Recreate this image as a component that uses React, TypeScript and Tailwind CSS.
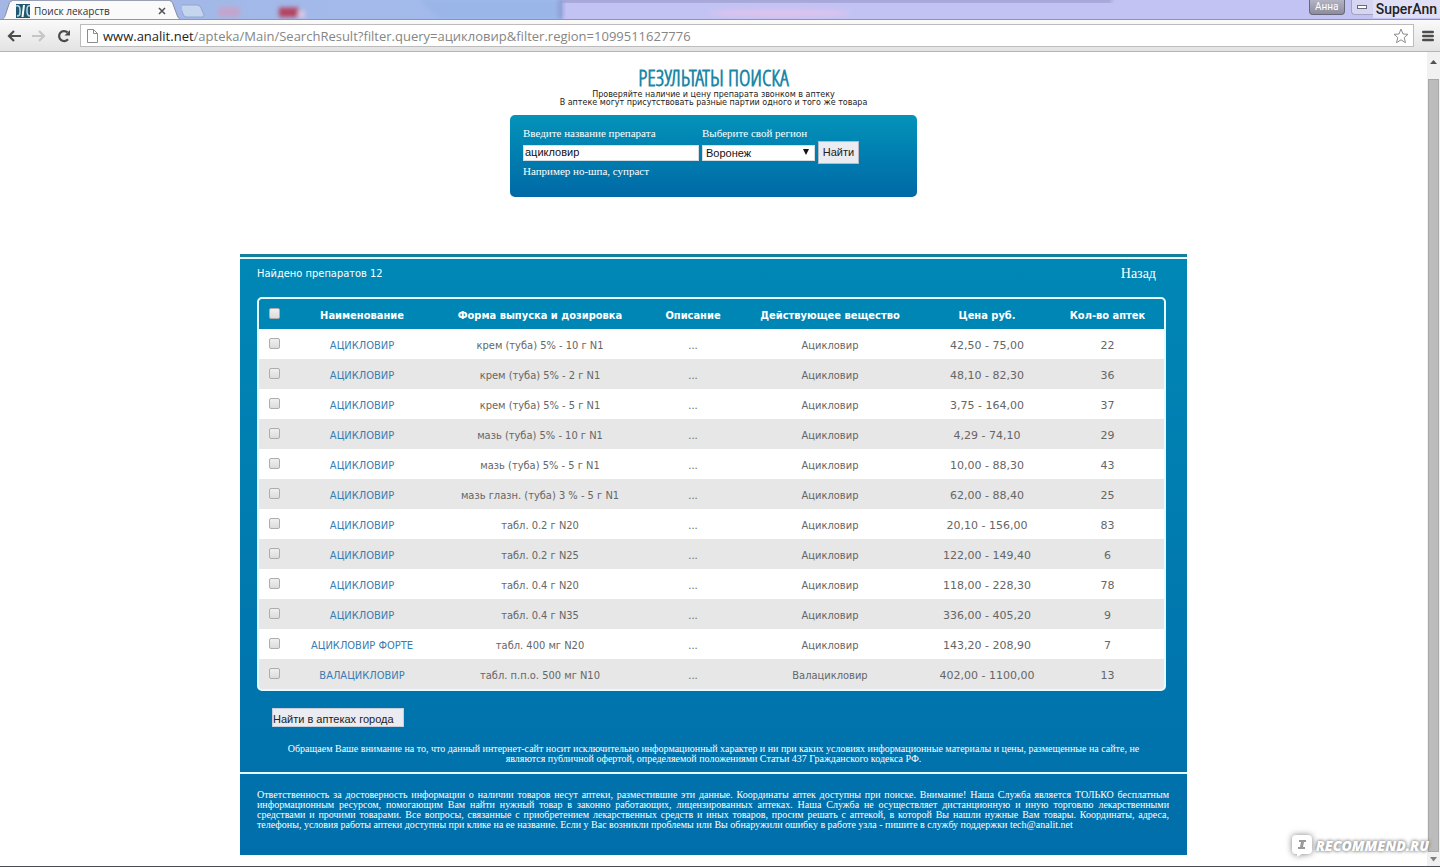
import React from 'react';
import { clsx } from 'clsx';

interface Drug {
  name: string;
  form: string;
  substance: string;
  price: string;
  count: number;
}

const drugs: Drug[] = [
  { name: 'АЦИКЛОВИР', form: 'крем (туба) 5% - 10 г N1', substance: 'Ацикловир', price: '42,50 - 75,00', count: 22 },
  { name: 'АЦИКЛОВИР', form: 'крем (туба) 5% - 2 г N1', substance: 'Ацикловир', price: '48,10 - 82,30', count: 36 },
  { name: 'АЦИКЛОВИР', form: 'крем (туба) 5% - 5 г N1', substance: 'Ацикловир', price: '3,75 - 164,00', count: 37 },
  { name: 'АЦИКЛОВИР', form: 'мазь (туба) 5% - 10 г N1', substance: 'Ацикловир', price: '4,29 - 74,10', count: 29 },
  { name: 'АЦИКЛОВИР', form: 'мазь (туба) 5% - 5 г N1', substance: 'Ацикловир', price: '10,00 - 88,30', count: 43 },
  { name: 'АЦИКЛОВИР', form: 'мазь глазн. (туба) 3 % - 5 г N1', substance: 'Ацикловир', price: '62,00 - 88,40', count: 25 },
  { name: 'АЦИКЛОВИР', form: 'табл. 0.2 г N20', substance: 'Ацикловир', price: '20,10 - 156,00', count: 83 },
  { name: 'АЦИКЛОВИР', form: 'табл. 0.2 г N25', substance: 'Ацикловир', price: '122,00 - 149,40', count: 6 },
  { name: 'АЦИКЛОВИР', form: 'табл. 0.4 г N20', substance: 'Ацикловир', price: '118,00 - 228,30', count: 78 },
  { name: 'АЦИКЛОВИР', form: 'табл. 0.4 г N35', substance: 'Ацикловир', price: '336,00 - 405,20', count: 9 },
  { name: 'АЦИКЛОВИР ФОРТЕ', form: 'табл. 400 мг N20', substance: 'Ацикловир', price: '143,20 - 208,90', count: 7 },
  { name: 'ВАЛАЦИКЛОВИР', form: 'табл. п.п.о. 500 мг N10', substance: 'Валацикловир', price: '402,00 - 1100,00', count: 13 },
];

const TabStrip: React.FC = () => (
  <div className="relative flex h-5 overflow-hidden border-b border-[#8f95a8] bg-linear-to-r from-[#a3b6e4] via-[#a2bdf0] to-[#c3c6f2]">
    <svg className="absolute inset-0 h-full w-full" preserveAspectRatio="none" viewBox="0 0 1440 20" aria-hidden="true">
      <defs>
        <filter id="soft" x="-50%" y="-50%" width="200%" height="200%">
          <feGaussianBlur stdDeviation="2" />
        </filter>
      </defs>
      <path d="M420 0H565V20H440Z" fill="#9ab5e8" filter="url(#soft)" />
      <rect x="562" y="0" width="878" height="20" fill="#c3c3f3" />
      <rect x="558" y="0" width="5" height="20" fill="#8d9fd6" filter="url(#soft)" />
      <rect x="562" y="0" width="550" height="2" fill="#6f6ba6" filter="url(#soft)" />
      <g filter="url(#soft)">
        <rect x="218" y="7" width="22" height="11" rx="4" fill="#c3a5cc" />
        <rect x="279" y="8" width="20" height="10" fill="#b6435f" />
        <rect x="298" y="11" width="7" height="8" fill="#dcc7e4" />
        <ellipse cx="780" cy="14" rx="70" ry="4" fill="#dcc3ee" />
      </g>
    </svg>
    <svg className="relative h-5 w-3 shrink-0" viewBox="0 0 12 20" aria-hidden="true">
      <path d="M0 20C4 19 5 17 6 13L9 4C10 2 10 1 12 1V20Z" fill="#fafafa" />
      <path d="M0 20C4 19 5 17 6 13L9 4C10 2 10 1 12 1" fill="none" stroke="#858ba0" />
    </svg>
    <div className="relative flex w-[158px] shrink-0 items-center gap-1 border-t border-[#9aa0b4] bg-[#fafafa] pl-1 pt-0.5 text-[#333]">
      <svg className="h-[14px] w-[14px]" viewBox="0 0 14 14" aria-hidden="true">
        <rect width="14" height="14" fill="#1f5870" />
        <path d="M0 2C3 1 4 3 4 6V9C4 11 3 12 1 12" stroke="#b9d9e4" strokeWidth="1.5" fill="none" />
        <path d="M8 1L6.5 13" stroke="#fff" strokeWidth="2" />
        <path d="M14 2C11 1 11 4 11 7C11 10 12 12 14 12" stroke="#b9d9e4" strokeWidth="1.5" fill="none" />
      </svg>
      <span className="grow font-['Open_Sans','Noto_Sans',sans-serif] text-[10px] leading-4">Поиск лекарств</span>
      <button type="button" aria-label="Закрыть вкладку" className="mr-1">
        <svg className="h-2 w-2" viewBox="0 0 8 8" aria-hidden="true">
          <path d="M1 1L7 7M7 1L1 7" stroke="#555" strokeWidth="1.6" />
        </svg>
      </button>
    </div>
    <svg className="relative h-5 w-3 shrink-0" viewBox="0 0 12 20" aria-hidden="true">
      <path d="M0 1C2 1 2 2 3 4L7 15C8 18 9 19 12 20H0Z" fill="#fafafa" />
      <path d="M0 1C2 1 2 2 3 4L7 15C8 18 9 19 12 20" fill="none" stroke="#858ba0" />
    </svg>
    <svg className="relative h-5 w-6 shrink-0" viewBox="0 0 24 20" aria-hidden="true">
      <path d="M-2 5H15Q18 5 19 8L22 15Q22 17 20 17H4Q2 17 1 14Z" fill="#c5d5ee" stroke="#93a6d0" />
    </svg>
    <div className="relative ml-auto flex items-start font-['Roboto',sans-serif]">
      <button type="button" className="mr-1.5 h-[15px] w-9 rounded-b border border-t-0 border-[#66687a] bg-linear-to-b from-[#b3b3c4] to-[#8c8c9c] text-[10px] leading-[14px] text-white">
        Анна
      </button>
      <div className="flex h-[15px] w-[22px] items-center justify-center rounded-bl border border-t-0 border-r-0 border-[#a2a2c2] bg-[#d6d6f3]">
        <span className="h-1 w-2.5 border border-[#6b6b80] bg-white" />
      </div>
      <span className="h-[18px] bg-[#e0dff6] px-[3px] text-sm font-medium leading-[19px] text-[#222]">SuperAnn</span>
    </div>
  </div>
);

const Toolbar: React.FC = () => (
  <div className="flex h-8 items-center border-b border-[#b4b4b4] bg-linear-to-b from-[#fafafa] to-[#e3e3e3] pl-[7px] pr-1.5">
    <button type="button" aria-label="Назад" className="mr-[11px]">
      <svg className="h-3 w-[14px]" viewBox="0 0 14 12" fill="none" stroke="#4c4c4c" strokeWidth="2.2" aria-hidden="true">
        <path d="M14 6H2M7 1L2 6L7 11" />
      </svg>
    </button>
    <button type="button" aria-label="Вперёд" className="mr-[11px]">
      <svg className="h-3 w-[14px]" viewBox="0 0 14 12" fill="none" stroke="#c6c6c6" strokeWidth="2.2" aria-hidden="true">
        <path d="M0 6H12M7 1L12 6L7 11" />
      </svg>
    </button>
    <button type="button" aria-label="Обновить" className="mr-[9px]">
      <svg className="h-[14px] w-[14px]" viewBox="0 0 14 14" aria-hidden="true">
        <path d="M11 10.2A5 5 0 1 1 10.5 3.4" fill="none" stroke="#4c4c4c" strokeWidth="2.2" />
        <path d="M13 1V6.5H7.5Z" fill="#4c4c4c" />
      </svg>
    </button>
    <div className="flex h-[23px] grow items-center border border-[#bcbcbc] bg-white pl-1.5 pr-1">
      <svg className="mr-[5px] h-[14px] w-[11px]" viewBox="0 0 11 14" fill="none" stroke="#8c8c8c" aria-hidden="true">
        <path d="M.5 .5H6.5L10.5 4.5V13.5H.5ZM6.5 .5V4.5H10.5" />
      </svg>
      <span className="grow font-['Open_Sans','Noto_Sans',sans-serif] text-[13px] leading-5 text-[#858585]">
        <span className="text-[#222]">www.analit.net</span>
        /apteka/Main/SearchResult?filter.query=ацикловир&amp;filter.region=1099511627776
      </span>
      <button type="button" aria-label="Добавить в закладки">
        <svg className="h-4 w-4" viewBox="0 0 16 16" fill="none" stroke="#8c8c8c" strokeLinejoin="round" aria-hidden="true">
          <path d="M8 1L10 6L15 6.3L11.2 9.6L12.5 14.7L8 11.8L3.5 14.7L4.8 9.6L1 6.3L6 6Z" />
        </svg>
      </button>
    </div>
    <button type="button" aria-label="Меню" className="ml-2">
      <svg className="h-3 w-3" viewBox="0 0 12 12" stroke="#4c4c4c" strokeWidth="2.4" strokeLinecap="round" aria-hidden="true">
        <path d="M1.2 2H10.8M1.2 6H10.8M1.2 10H10.8" />
      </svg>
    </button>
  </div>
);

const SearchForm: React.FC = () => (
  <form className="mx-auto mt-2 grid h-[82px] w-[407px] grid-cols-[176px_113px_41px] content-start items-center gap-x-[3px] rounded-[5px] bg-linear-to-b from-[#0593b9] to-[#0069a6] px-[13px] pt-[10px] font-['Liberation_Serif',serif] text-[11px] text-white">
    <label htmlFor="query" className="leading-4">Введите название препарата</label>
    <label htmlFor="region" className="col-span-2 leading-4">Выберите свой регион</label>
    <input
      id="query"
      type="text"
      defaultValue="ацикловир"
      className="h-4 w-full border border-[#d5dde0] bg-white px-px font-['Liberation_Sans',sans-serif] text-[11px] text-[#111]"
    />
    <div className="relative">
      <select
        id="region"
        defaultValue="Воронеж"
        className="block h-4 w-full appearance-none border border-[#d5dde0] bg-white px-[3px] font-['Liberation_Sans',sans-serif] text-[11px] leading-[14px] text-[#111]"
      >
        <option>Воронеж</option>
      </select>
      <svg className="pointer-events-none absolute right-1.5 top-1 h-1.5 w-1.5" viewBox="0 0 6 6" aria-hidden="true">
        <path d="M0 0H6L3 6Z" fill="#111" />
      </svg>
    </div>
    <button type="button" className="h-[23px] border border-[#b9b9c4] bg-[#ebebf2] font-['Liberation_Sans',sans-serif] text-[11px] text-[#222]">
      Найти
    </button>
    <p className="col-span-3 leading-[14px]">Например но-шпа, супраст</p>
  </form>
);

const Check: React.FC<{ label: string }> = ({ label }) => (
  <input
    type="checkbox"
    aria-label={label}
    className="mb-1 block h-[11px] w-[11px] appearance-none rounded-[2px] border border-[#adadad] bg-linear-to-b from-[#f0f0f0] to-[#dcdcdc]"
  />
);

const ResultsTable: React.FC = () => (
  <div className="mx-[17px] mr-[21px] overflow-hidden rounded-[5px] border-2 border-[#e6fbff] bg-white">
    <table className="w-full table-fixed border-collapse text-center font-['DejaVu_Sans_Condensed','DejaVu_Sans',sans-serif] text-[11px] leading-4 text-[#666] [&_td]:pt-[3px] [&_th]:pt-[3px]">
      <colgroup>
        <col className="w-[31px]" />
        <col className="w-[144px]" />
        <col className="w-[212px]" />
        <col className="w-[94px]" />
        <col className="w-[180px]" />
        <col className="w-[134px]" />
        <col />
      </colgroup>
      <thead>
        <tr className="h-[30px] bg-[#0086b4] text-white">
          <th className="pl-2.5"><Check label="Выбрать все" /></th>
          <th>Наименование</th>
          <th>Форма выпуска и дозировка</th>
          <th>Описание</th>
          <th>Действующее вещество</th>
          <th>Цена руб.</th>
          <th className="pr-[3px]">Кол-во аптек</th>
        </tr>
      </thead>
      <tbody>
        {drugs.map((drug, i) => (
          <tr key={i} className={clsx('h-[30px]', i % 2 ? 'bg-[#e7e7e7]' : 'bg-white')}>
            <td className="pl-2.5"><Check label={`${drug.name}, ${drug.form}`} /></td>
            <td><a href="#" className="text-[#3a7cb0]">{drug.name}</a></td>
            <td>{drug.form}</td>
            <td><a href="#">...</a></td>
            <td>{drug.substance}</td>
            <td className="font-['DejaVu_Sans',sans-serif]">{drug.price}</td>
            <td className="pr-[3px] font-['DejaVu_Sans',sans-serif]">{drug.count}</td>
          </tr>
        ))}
      </tbody>
    </table>
  </div>
);

const Scrollbar: React.FC = () => (
  <div className="flex w-[13px] shrink-0 flex-col items-center bg-[#f1f1f1]">
    <svg className="my-2 h-[11px] w-[7px]" viewBox="0 0 7 11" aria-hidden="true">
      <path d="M0 4L3.5 0L7 4Z" fill="#505050" />
    </svg>
    <div className="w-[11px] grow border border-[#a8a8a8] bg-[#bcbcbc]" />
    <svg className="my-1 h-1.5 w-[7px]" viewBox="0 0 7 6" aria-hidden="true">
      <path d="M0 1H7L3.5 5.5Z" fill="#808080" />
    </svg>
  </div>
);

const Watermark: React.FC = () => (
  <div className="absolute bottom-2 right-[11px] flex items-center gap-0.5 font-['Open_Sans',sans-serif] text-white">
    <svg className="h-6 w-6 drop-shadow-[0_0_3px_rgba(0,0,0,0.5)]" viewBox="0 0 24 24" aria-hidden="true">
      <path d="M6 1H18Q22 1 22 5V16Q22 20 18 20H12L7 23V20H6Q2 20 2 16V5Q2 1 6 1Z" fill="#fff" />
      <path d="M9 6H16V8H14L13 13H15V15H8V13H10L11 8H9Z" fill="#999" />
    </svg>
    <span className="text-sm font-extrabold italic leading-5 [text-shadow:0_0_3px_#888,0_0_4px_#888]">RECOMMEND.RU</span>
  </div>
);

export default function App() {
  return (
    <div className="relative flex min-h-screen flex-col border-b border-[#4d4d57] bg-white">
      <TabStrip />
      <Toolbar />
      <div className="flex grow">
        <main className="grow pb-[11px]">
          <header className="pt-3 text-center">
            <h1 className="mb-px font-['Open_Sans_Condensed_Light','Open_Sans_Condensed','DejaVu_Sans_Condensed',sans-serif] text-[22px] font-semibold leading-[26px] text-[#1c87a8]">
              РЕЗУЛЬТАТЫ ПОИСКА
            </h1>
            <p className="font-['DejaVu_Sans',sans-serif] text-[8px] leading-[8px] text-[#222]">
              Проверяйте наличие и цену препарата звонком в аптеку
              <br />
              В аптеке могут присутствовать разные партии одного и того же товара
            </p>
          </header>
          <SearchForm />
          <section className="mx-auto mt-[57px] w-[947px] border-t-[3px] border-[#14809c]">
            <div className="border-t-2 border-[#e6fbff] bg-linear-to-b from-[#0087b5] to-[#006eaa]">
              <div className="flex h-[38px] items-center justify-between pl-[17px] pr-[31px] pb-2 text-white">
                <p className="font-['DejaVu_Sans_Condensed','DejaVu_Sans',sans-serif] text-[11px]">Найдено препаратов 12</p>
                <a href="#" className="font-['Liberation_Serif',serif] text-sm">Назад</a>
              </div>
              <ResultsTable />
              <button type="button" className="ml-8 mt-[17px] block h-[19px] w-[132px] border border-[#c9cfd8] bg-[#ebebf2] pt-0.5 text-left font-['Liberation_Sans',sans-serif] text-[11px] leading-4 text-[#222]">
                Найти в аптеках города
              </button>
              <p className="mx-8 mt-[17px] pb-2 text-center font-['Liberation_Serif',serif] text-[10px] leading-[10px] text-white">
                Обращаем Ваше внимание на то, что данный интернет-сайт носит исключительно информационный характер и ни при каких условиях информационные материалы и цены, размещенные на сайте, не являются публичной офертой, определяемой положениями Статьи 437 Гражданского кодекса РФ.
              </p>
              <footer className="border-t-2 border-[#e6fbff] pl-[17px] pr-[18px] pb-[25px] pt-4 text-justify font-['Liberation_Serif',serif] text-[10px] leading-[10px] text-white">
                Ответственность за достоверность информации о наличии товаров несут аптеки, разместившие эти данные. Координаты аптек доступны при поиске. Внимание! Наша Служба является ТОЛЬКО бесплатным информационным ресурсом, помогающим Вам найти нужный товар в законно работающих, лицензированных аптеках. Наша Служба не осуществляет дистанционную и иную торговлю лекарственными средствами и прочими товарами. Все вопросы, связанные с приобретением лекарственных средств и иных товаров, просим решать с аптекой, в которой Вы нашли нужные Вам товары. Координаты, адреса, телефоны, условия работы аптеки доступны при клике на ее название. Если у Вас возникли проблемы или Вы обнаружили ошибку в работе узла - пишите в службу поддержки tech@analit.net
              </footer>
            </div>
          </section>
        </main>
        <Scrollbar />
      </div>
      <Watermark />
    </div>
  );
}
